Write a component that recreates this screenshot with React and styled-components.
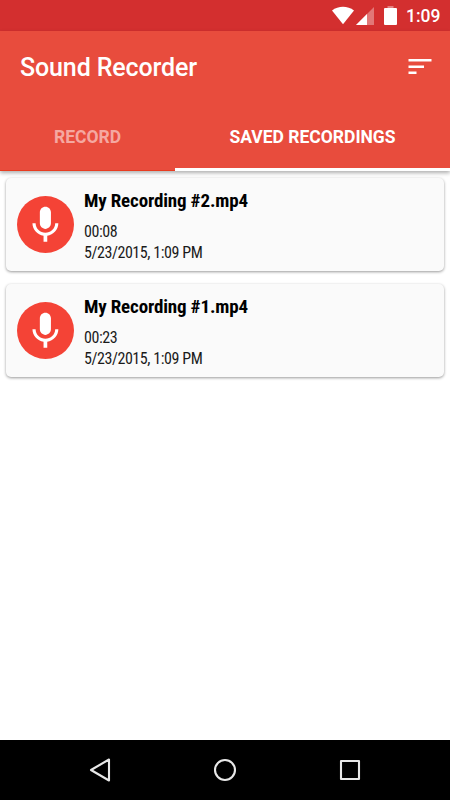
import React from 'react';
import styled, {createGlobalStyle} from 'styled-components';

const GlobalStyle = createGlobalStyle`
    * { box-sizing: border-box; }
    body {
        margin: 0;
        background: #fff;
        font-family: Roboto, "Liberation Sans", sans-serif;
    }
`;

const Screen = styled.div`
    display: flex;
    flex-direction: column;
    height: 800px;
    width: 450px;
    overflow: hidden;
`;

const StatusBar = styled.div`
    display: flex;
    align-items: center;
    justify-content: flex-end;
    height: 31px;
    padding-right: 9px;
    background: #d32f2f;
    color: #fff;
    font-size: 17.5px;
`;

const StatusIcons = styled.svg`
    margin-right: 9px;
`;

const Clock = styled.span`
    line-height: 31px;
    padding-top: 2px;
    width: 35px;
    white-space: nowrap;
    font-weight: 500;
`;

const Header = styled.header`
    height: 140px;
    background: #e84c3d;
    box-shadow: 0 2px 4px rgba(0, 0, 0, 0.32);
    z-index: 1;
`;

const Toolbar = styled.div`
    display: flex;
    align-items: center;
    justify-content: space-between;
    height: 72px;
    padding: 0 18px 0 20px;
`;

const Title = styled.h1`
    margin: 0;
    color: #fff;
    font-size: 25px;
    font-weight: 500;
    letter-spacing: -0.12px;
`;

const Tabs = styled.nav`
    display: flex;
    height: 68px;
`;

const Tab = styled.div`
    display: flex;
    align-items: center;
    justify-content: center;
    width: ${props => props.$width}px;
    height: 68px;
    padding-top: ${props => props.$active ? 3 : 1}px;
    border-bottom: ${props => props.$active ? '3px solid #fff' : '1px solid #e83c20'};
    color: ${props => props.$active ? '#fff' : '#f5a8a1'};
    font-size: 17.5px;
    font-weight: 700;
    white-space: nowrap;
`;

const List = styled.main`
    display: flex;
    flex: 1;
    flex-direction: column;
    gap: 13px;
    padding: 7px 6px;
    background: #fff;
`;

const Card = styled.article`
    display: flex;
    height: 93px;
    padding: 18px 11px 0;
    border-radius: 5px;
    background: #fafafa;
    box-shadow: 0 1px 3px rgba(0, 0, 0, 0.4);
`;

const Details = styled.div`
    display: flex;
    flex-direction: column;
    margin: -7px 0 0 10px;
    font-family: "Roboto Condensed", Roboto, sans-serif;
    font-stretch: condensed;
    color: #1a1a1a;
`;

const FileName = styled.h2`
    margin: 0 0 9px;
    font-size: 19px;
    font-weight: 700;
    letter-spacing: -0.16px;
    line-height: 24px;
    color: #000;
`;

const Info = styled.span`
    font-size: 16px;
    letter-spacing: -0.43px;
    line-height: 20.5px;
`;

const NavBar = styled.footer`
    height: 60px;
    background: #000;
`;

const recordings = [
    {name: 'My Recording #2.mp4', length: '00:08', date: '5/23/2015, 1:09 PM'},
    {name: 'My Recording #1.mp4', length: '00:23', date: '5/23/2015, 1:09 PM'},
];

const MicIcon = () => (
    <svg width="57" height="57" viewBox="0 0 57 57">
        <circle cx="28.5" cy="28.5" r="28.5" fill="#f44336"/>
        <path
            transform="translate(6.2 7) scale(1.85)"
            fill="#fff"
            d="M12 14c1.66 0 2.99-1.34 2.99-3L15 5c0-1.66-1.34-3-3-3S9 3.34 9 5v6c0 1.66 1.34 3 3 3zm5.3-3c0 3-2.54 5.1-5.3 5.1S6.7 14 6.7 11H5c0 3.41 2.72 6.23 6 6.72V21h2v-3.28c3.28-.48 6-3.3 6-6.72h-1.7z"
        />
    </svg>
);

const RecordingCard = ({name, length, date}) => (
    <Card>
        <MicIcon/>
        <Details>
            <FileName>{name}</FileName>
            <Info>{length}</Info>
            <Info>{date}</Info>
        </Details>
    </Card>
);

const App = () => {
    return (
        <Screen>
            <GlobalStyle/>
            <StatusBar>
                <StatusIcons width="67" height="31" viewBox="330 0 67 31" fill="#fff">
                    <path d="M332 10.5C338.5 5.5 347.5 5.5 354 10.5L343 24.3Z"/>
                    <path d="M374 7V25H356Z" opacity="0.35"/>
                    <path d="M367 14V25H356Z"/>
                    <path d="M387.5 6h6v2h-6z" opacity="0.4"/>
                    <path d="M385 8h11q1 0 1 1v15q0 1-1 1h-11q-1 0-1-1V9q0-1 1-1z"/>
                </StatusIcons>
                <Clock>1:09</Clock>
            </StatusBar>
            <Header>
                <Toolbar>
                    <Title>Sound Recorder</Title>
                    <svg width="24" height="18" viewBox="0 0 24 18" fill="#fff">
                        <path d="M0.5 1h23v2.5h-23zM0.5 7.5h15.5v2.5h-15.5zM0.5 13.5h8v2.5h-8z"/>
                    </svg>
                </Toolbar>
                <Tabs>
                    <Tab $width={175}>RECORD</Tab>
                    <Tab $width={275} $active>SAVED RECORDINGS</Tab>
                </Tabs>
            </Header>
            <List>
                {recordings.map(r => <RecordingCard key={r.name} {...r}/>)}
            </List>
            <NavBar>
                <svg width="450" height="60" viewBox="0 0 450 60" fill="none" stroke="#e8e8e8" strokeWidth="2.1" strokeLinejoin="round">
                    <path d="M109 19.5V40.5L91 30Z"/>
                    <circle cx="225" cy="30" r="10"/>
                    <rect x="341" y="21" width="18" height="18"/>
                </svg>
            </NavBar>
        </Screen>
    );
};

export default App;
